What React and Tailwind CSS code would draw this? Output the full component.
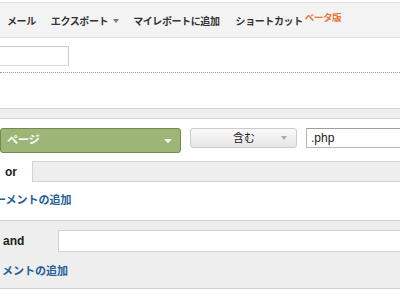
import React from "react";

const font = { fontFamily: '"Liberation Sans", "Noto Sans CJK JP", sans-serif' };

function NavBar() {
  return (
    <div className="mt-[2px] h-[36px] bg-[#f3f3f3] border-t border-b border-[#e2e2e2] flex items-center whitespace-nowrap text-[10px] tracking-[-0.4px] font-bold text-[#333] pl-[7px] pt-[2px]">
      <span className="shrink-0">メール</span>
      <span className="ml-[15px] shrink-0 flex items-center">
        エクスポート
        <span className="ml-[5px] w-0 h-0 border-l-[3.5px] border-r-[3.5px] border-t-[4px] border-l-transparent border-r-transparent border-t-[#777]" />
      </span>
      <span className="ml-[14px] shrink-0">マイレポートに追加</span>
      <span className="ml-[16px] shrink-0">ショートカット</span>
      <span className="ml-[2px] shrink-0 text-[#e8743b] text-[9.5px] -mt-[5px]">ベータ版</span>
    </div>
  );
}

export default function App() {
  return (
    <div className="w-[400px] h-[300px] overflow-hidden bg-white" style={font}>
      <NavBar />
      {/* name input + dotted divider */}
      <div className="pt-[8px]">
        <div className="-ml-[40px] w-[109px] h-[20px] border border-[#c9c9c9] border-b-[#dcdcdc] bg-white" />
        <div className="mt-[6px] border-t border-dotted border-[#999]" />
      </div>
      <div className="mt-[35px] h-[11px] bg-[#eeeeee] border-t border-b border-[#d4d4d4]" />
      {/* condition row */}
      <div className="mt-[9px] flex items-start">
        <div className="w-[181px] h-[25px] rounded-[3px] bg-[#9db677] border border-[#6f8c4c] flex items-center justify-between pl-[6px] pr-[8px] text-white font-bold text-[11px]">
          <span>ページ</span>
          <span className="w-0 h-0 border-l-[4px] border-r-[4px] border-t-[4px] border-l-transparent border-r-transparent border-t-white" />
        </div>
        <div className="ml-[9px] w-[107px] h-[20px] rounded-[3px] border border-[#cbcbcb] bg-gradient-to-b from-[#f9f9f9] to-[#e6e6e6] flex items-center text-[11px] text-[#222]">
          <span className="ml-[42px]">含む</span>
          <span className="ml-auto mr-[9px] w-0 h-0 border-l-[3.5px] border-r-[3.5px] border-t-[4px] border-l-transparent border-r-transparent border-t-[#aaa]" />
        </div>
        <div className="ml-[9px] flex-1 h-[20px] border border-[#b9b9b9] border-t-[#9e9e9e] bg-white flex items-center pl-[4px] text-[12px] text-[#222] -mr-[20px]">
          .php
        </div>
      </div>
      {/* or row */}
      <div className="mt-[8px] flex items-center">
        <span className="w-[32px] pl-[5px] text-[12px] font-bold text-[#222]">or</span>
        <div className="flex-1 h-[21px] bg-[#eeeeee] border border-[#d2d2d2] -mr-[2px]" />
      </div>
      <div className="mt-[10px] -ml-[5px] text-[11px] font-bold text-[#1f5f97]">ーメントの追加</div>
      {/* and block */}
      <div className="mt-[11px] h-[69px] bg-[#eeeeee] border-t border-b border-[#d0d0d0]">
        <div className="mt-[9px] flex items-center">
          <span className="w-[58px] pl-[3px] text-[12px] font-bold text-[#222]">and</span>
          <div className="flex-1 h-[22px] bg-white border border-[#d0d0d0] -mr-[2px]" />
        </div>
        <div className="mt-[11px] pl-[2px] text-[11px] font-bold text-[#1f5f97]">メントの追加</div>
      </div>
    </div>
  );
}
